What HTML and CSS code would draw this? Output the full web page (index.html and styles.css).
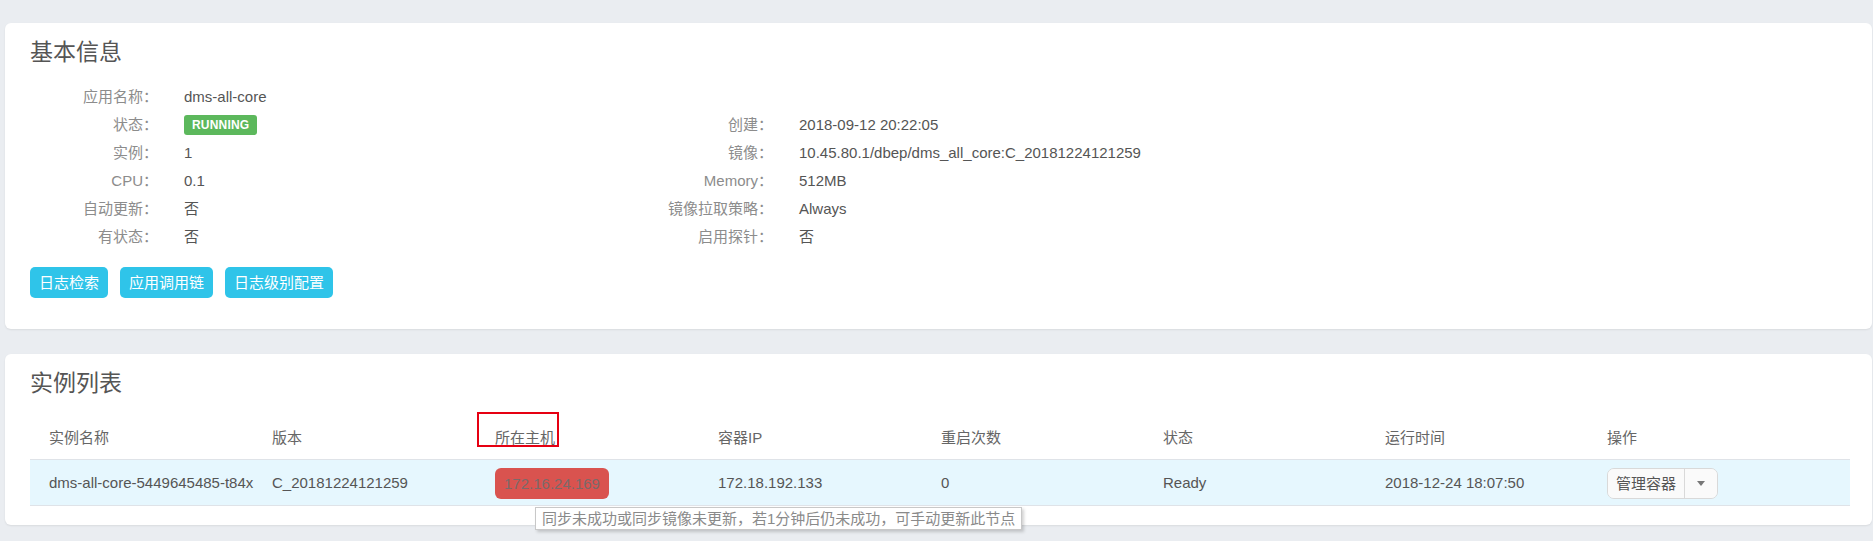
FILE: index.html
```html
<!DOCTYPE html>
<html lang="zh-CN">
<head>
<meta charset="utf-8">
<title>应用详情</title>
<link rel="stylesheet" href="styles.css">
</head>
<body>
<div class="page">
  <section class="card info-card">
    <h2 class="card-title">基本信息</h2>
    <div class="info-grid">
      <div class="lbl">应用名称：</div><div class="val">dms-all-core</div><div class="lbl"></div><div class="val"></div>
      <div class="lbl">状态：</div><div class="val"><span class="badge">RUNNING</span></div><div class="lbl">创建：</div><div class="val">2018-09-12 20:22:05</div>
      <div class="lbl">实例：</div><div class="val">1</div><div class="lbl">镜像：</div><div class="val">10.45.80.1/dbep/dms_all_core:C_20181224121259</div>
      <div class="lbl">CPU：</div><div class="val">0.1</div><div class="lbl">Memory：</div><div class="val">512MB</div>
      <div class="lbl">自动更新：</div><div class="val">否</div><div class="lbl">镜像拉取策略：</div><div class="val">Always</div>
      <div class="lbl">有状态：</div><div class="val">否</div><div class="lbl">启用探针：</div><div class="val">否</div>
    </div>
    <div class="actions">
      <button class="btn-info">日志检索</button>
      <button class="btn-info">应用调用链</button>
      <button class="btn-info">日志级别配置</button>
    </div>
  </section>

  <section class="card list-card">
    <h2 class="card-title">实例列表</h2>
    <table class="inst-table">
      <colgroup>
        <col class="c223"><col class="c223"><col class="c223"><col class="c223">
        <col class="c222"><col class="c222"><col class="c222"><col>
      </colgroup>
      <thead>
        <tr>
          <th>实例名称</th>
          <th>版本</th>
          <th class="marked">所在主机<span class="mark-box"></span></th>
          <th>容器IP</th>
          <th>重启次数</th>
          <th>状态</th>
          <th>运行时间</th>
          <th>操作</th>
        </tr>
      </thead>
      <tbody>
        <tr>
          <td>dms-all-core-5449645485-t84x</td>
          <td>C_20181224121259</td>
          <td class="host-cell"><span class="host-pill">172.16.24.169</span><span class="tip">同步未成功或同步镜像未更新，若1分钟后仍未成功，可手动更新此节点</span></td>
          <td>172.18.192.133</td>
          <td>0</td>
          <td>Ready</td>
          <td>2018-12-24 18:07:50</td>
          <td>
            <span class="btn-group">
              <button class="btn-default">管理容器</button><button class="btn-default caret-btn"><span class="caret"></span></button>
            </span>
          </td>
        </tr>
      </tbody>
    </table>
  </section>
</div>
</body>
</html>
```

FILE: styles.css
```css
* { box-sizing: border-box; }
html, body { margin: 0; padding: 0; }
body {
  background: #eaedf1;
  font-family: "Liberation Sans", "Noto Sans CJK SC", sans-serif;
  font-size: 15px;
  color: #555;
}
.page {
  padding: 23px 1px 20px 5px;
  display: flex;
  flex-direction: column;
  gap: 25px;
}
.card {
  background: #fff;
  border-radius: 6px;
  box-shadow: 0 1px 2px rgba(0,0,0,0.08);
}
.info-card { padding: 16px 22px 31px 25px; }
.list-card { padding: 16px 22px 19px 25px; }
.card-title {
  margin: 0;
  font-size: 23px;
  line-height: 26px;
  font-weight: normal;
  color: #555;
}
.info-card .card-title { margin-bottom: 18px; }
.list-card .card-title { margin-bottom: 20px; }

.info-grid {
  display: grid;
  grid-template-columns: 154px 456px 159px 1fr;
  grid-auto-rows: 28px;
  line-height: 28px;
}
.lbl {
  text-align: right;
  padding-right: 26px;
  color: #8c8c8c;
  white-space: nowrap;
}
.val { color: #555; white-space: nowrap; }
.badge {
  display: inline-block;
  vertical-align: middle;
  background: #5cb85c;
  color: #fff;
  font-weight: bold;
  font-size: 12px;
  line-height: 20px;
  height: 20px;
  padding: 0 8px;
  border-radius: 3px;
  letter-spacing: 0.2px;
  position: relative;
  top: -1px;
}
.actions {
  margin-top: 16px;
  display: flex;
  gap: 12px;
}
.btn-info {
  font-family: inherit;
  font-size: 15px;
  color: #fff;
  background: #2fc4e9;
  border: none;
  border-radius: 5px;
  height: 31px;
  line-height: 31px;
  padding: 0 9px;
  cursor: pointer;
}

.inst-table {
  width: 100%;
  table-layout: fixed;
  border-collapse: separate;
  border-spacing: 0;
}
.c223 { width: 223px; }
.c222 { width: 222px; }
.inst-table th {
  text-align: left;
  font-weight: normal;
  color: #666;
  line-height: 20px;
  padding: 12px 19px 11px;
  border-bottom: 1px solid #dfe3e8;
  white-space: nowrap;
}
.inst-table td {
  background: #e6f7fe;
  color: #555;
  line-height: 31px;
  padding: 6px 19px;
  border-bottom: 1px solid #dfe3e8;
  white-space: nowrap;
  vertical-align: middle;
}
.marked { position: relative; }
.mark-box {
  position: absolute;
  left: 1px;
  top: -4px;
  width: 82px;
  height: 35px;
  border: 2px solid #e60012;
}
.host-cell { position: relative; }
.host-pill {
  display: inline-block;
  background: #d9534f;
  color: #7a6a6a;
  height: 31px;
  line-height: 31px;
  padding: 0 9px;
  border-radius: 6px;
  vertical-align: middle;
}
.tip {
  position: absolute;
  left: 59px;
  top: 47px;
  z-index: 5;
  background: #fff;
  color: #8a8a8a;
  border: 1px solid #c8c8c8;
  padding: 1px 6px;
  line-height: 19px;
  font-size: 15px;
  white-space: nowrap;
  box-shadow: 2px 2px 3px rgba(0,0,0,0.18);
}
.btn-group {
  display: inline-flex;
  vertical-align: middle;
  border: 1px solid #d9d9d9;
  border-radius: 7px;
  background: #fafafa;
  height: 31px;
  overflow: hidden;
}
.btn-default {
  font-family: inherit;
  font-size: 15px;
  color: #555;
  background: #fafafa;
  border: none;
  height: 29px;
  line-height: 29px;
  padding: 0 8px;
  cursor: pointer;
}
.caret-btn {
  width: 33px;
  border-left: 1px solid #d9d9d9;
  padding: 0;
  display: flex;
  align-items: center;
  justify-content: center;
}
.caret {
  width: 0;
  height: 0;
  border-left: 4px solid transparent;
  border-right: 4px solid transparent;
  border-top: 5px solid #777;
}
```
